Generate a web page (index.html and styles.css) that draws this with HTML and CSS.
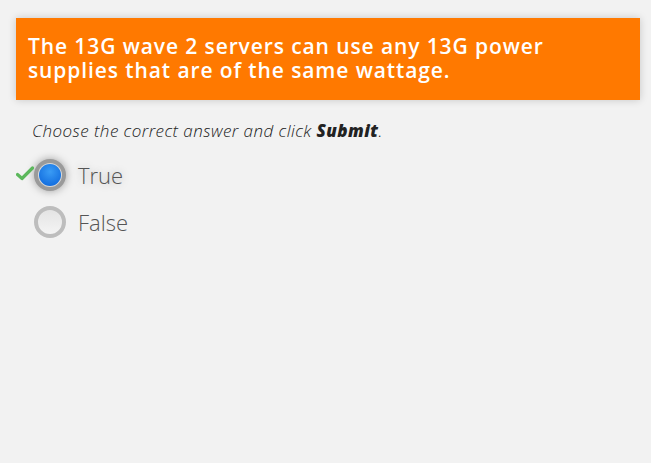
FILE: index.html
```html
<!DOCTYPE html>
<html>
<head>
<meta charset="utf-8">
<link rel="stylesheet" href="styles.css">
</head>
<body>
<div class="page">
  <div class="banner"><div class="banner-text">The 13G wave 2 servers can use any 13G power supplies that are of the same wattage.</div></div>
  <p class="instr">Choose the correct answer and click <b>Submit</b>.</p>
  <div class="options">
    <div class="opt selected">
      <svg class="check" width="18" height="16" viewBox="0 0 18 16"><path d="M1.5 9.5 L6 13.5 L16.5 3" fill="none" stroke="#5cb85c" stroke-width="3.2" stroke-linecap="round" stroke-linejoin="round"/></svg>
      <span class="radio"><span class="dot"></span></span>
      <span class="label">True</span>
    </div>
    <div class="opt">
      <span class="radio"></span>
      <span class="label">False</span>
    </div>
  </div>
</div>
</body>
</html>
```
FILE: styles.css
```css
html, body {
  margin: 0;
  padding: 0;
  background: #f2f2f2;
}
.page {
  padding-top: 18px;
  font-family: "Open Sans", Lato, sans-serif;
}
.banner {
  margin-left: 16px;
  width: 600px;
  padding: 16px 12px 18px 12px;
  background: #ff7900;
  color: #fff;
  font-size: 21px;
  font-weight: 600;
  letter-spacing: 0.9px;
  line-height: 24px;
  box-shadow: 0 0 8px rgba(0,0,0,0.18);
}
.banner-text {
  max-width: 560px;
}
.instr {
  margin: 21px 0 0 32px;
  font-size: 17px;
  font-style: italic;
  font-weight: 300;
  letter-spacing: 0.45px;
  color: #222;
  line-height: 20px;
}
.instr b {
  font-weight: 800;
}
.options {
  display: flex;
  flex-direction: column;
  gap: 15px;
  margin-top: 18px;
  margin-left: 34px;
}
.opt {
  position: relative;
  display: flex;
  align-items: center;
  gap: 12px;
  height: 32px;
}
.check {
  position: absolute;
  left: -18px;
  top: 6px;
}
.radio {
  box-sizing: border-box;
  width: 32px;
  height: 32px;
  border-radius: 50%;
  border: 4px solid #bdbdbd;
  background: linear-gradient(#e4e4e4, #f4f4f4);
  display: flex;
  align-items: center;
  justify-content: center;
}
.selected .radio {
  border-color: #9a9a9a;
  background: #d8d8d8;
  box-shadow: 0 0 9px rgba(0,0,0,0.35);
}
.dot {
  width: 22px;
  height: 22px;
  border-radius: 50%;
  background: radial-gradient(circle at 50% 35%, #3a9cf5, #1570e0 75%);
}
.label {
  font-size: 22px;
  font-weight: 300;
  color: #555;
}
.selected .label {
  text-shadow: 0 0 9px rgba(0,0,0,0.28);
}
```
